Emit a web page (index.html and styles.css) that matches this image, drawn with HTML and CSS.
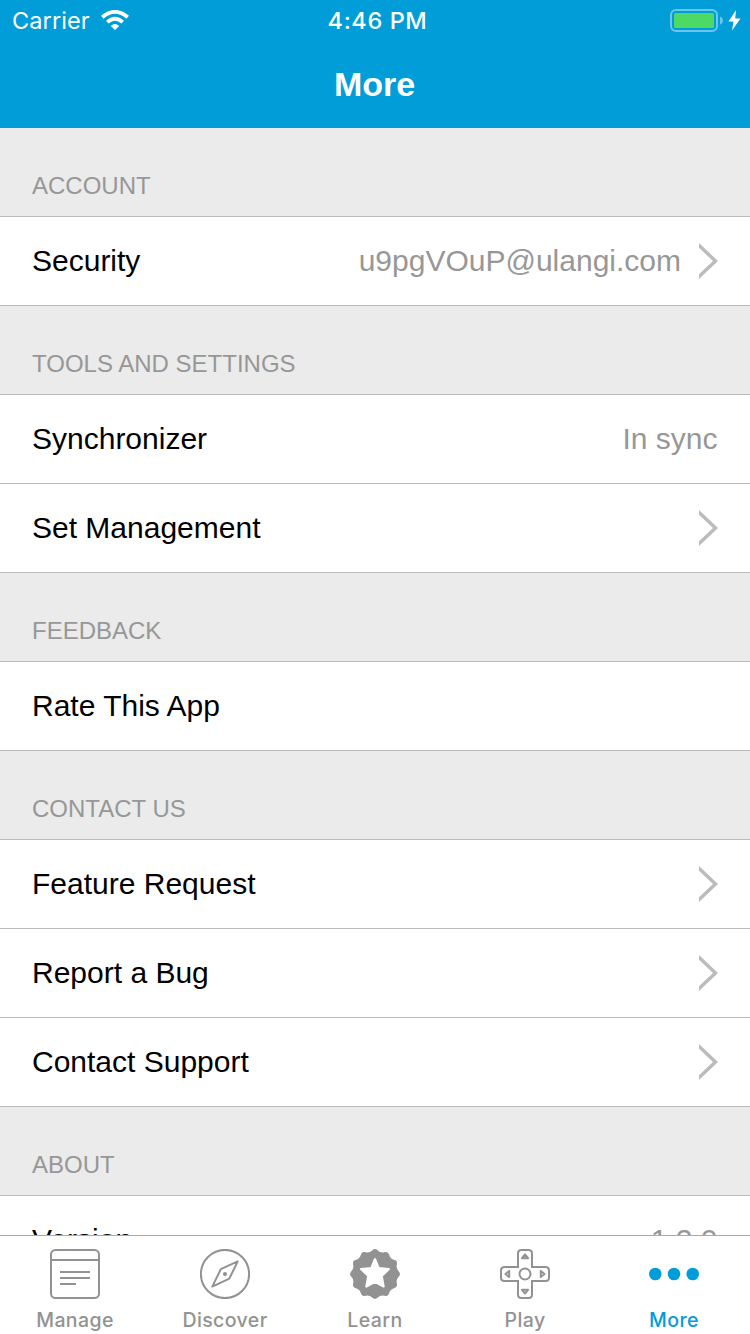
FILE: index.html
```html
<!DOCTYPE html>
<html lang="en">
<head>
<meta charset="utf-8">
<title>More</title>
<link rel="stylesheet" href="styles.css">
</head>
<body>
<svg class="defs" aria-hidden="true">
  <symbol id="chevron" viewBox="0 0 19 36"><path d="M0 0L19 18L0 36V31.2L14 18L0 4.8Z" fill="#bbb"/></symbol>
</svg>
<div class="screen">
  <header class="top">
    <div class="status">
      <div class="status-left">
        <span class="carrier">Carrier</span>
        <svg class="wifi" viewBox="0 0 28 20"><path d="M14 20L9.8 15.9Q14 12.3 18.2 15.9Z" fill="#fff"/><path d="M1.3 7.3Q14 -3.6 26.7 7.3M6.3 12.2Q14 5.2 21.7 12.2" fill="none" stroke="#fff" stroke-width="3.8"/></svg>
      </div>
      <span class="time">4:46 PM</span>
      <div class="status-right">
        <svg class="battery" viewBox="0 0 72 24"><rect x="1" y="1" width="46" height="21" rx="5" fill="none" stroke="#fff" stroke-opacity=".42" stroke-width="2"/><rect x="4" y="4" width="40" height="15" rx="1.5" fill="#4cd964"/><path d="M50 7.5Q53 8.5 53 11.5T50 15.5Z" fill="#fff" fill-opacity=".42"/><path d="M66 1L58.5 12.5H63.5L62 21.5L70.5 9.5H65.2Z" fill="#fff"/></svg>
      </div>
    </div>
    <h1 class="title">More</h1>
  </header>
  <main class="list">
    <h2 class="section">ACCOUNT</h2>
    <div class="row"><span>Security</span><span class="value">u9pgVOuP@ulangi.com</span><svg class="chevron"><use href="#chevron"/></svg></div>
    <h2 class="section">TOOLS AND SETTINGS</h2>
    <div class="row"><span>Synchronizer</span><span class="value">In sync</span></div>
    <div class="row"><span>Set Management</span><svg class="chevron"><use href="#chevron"/></svg></div>
    <h2 class="section">FEEDBACK</h2>
    <div class="row"><span>Rate This App</span></div>
    <h2 class="section">CONTACT US</h2>
    <div class="row"><span>Feature Request</span><svg class="chevron"><use href="#chevron"/></svg></div>
    <div class="row"><span>Report a Bug</span><svg class="chevron"><use href="#chevron"/></svg></div>
    <div class="row"><span>Contact Support</span><svg class="chevron"><use href="#chevron"/></svg></div>
    <h2 class="section">ABOUT</h2>
    <div class="row"><span>Version</span><span class="value">1.2.0</span></div>
  </main>
  <nav class="tabs">
    <div class="tab">
      <svg class="icon" viewBox="0 0 50 50"><g class="line"><rect x="1" y="1" width="48" height="48" rx="4.5"/><path d="M1 11H49M10 23H40M10 29H40M10 35H26"/></g></svg>
      <span class="label">Manage</span>
    </div>
    <div class="tab">
      <svg class="icon" viewBox="0 0 50 50"><g class="line"><circle cx="25" cy="25" r="24.1"/><path d="M37.7 12.4L20.8 20.2L12.3 37.6L29.3 29.6Z" stroke-linejoin="round"/></g><circle cx="25" cy="25" r="2.1" fill="#929292"/></svg>
      <span class="label">Discover</span>
    </div>
    <div class="tab">
      <svg class="icon" viewBox="-25 -25 50 50"><path d="M-2.8 -23.61Q0 -26.36 2.8 -23.61T9.39 -21.85T14.23 -19.05T19.05 -14.23T21.85 -9.39T23.61 -2.8Q26.36 0 23.61 2.8T21.85 9.39T19.05 14.23T14.23 19.05T9.39 21.85T2.8 23.61Q0 26.36 -2.8 23.61T-9.39 21.85T-14.23 19.05T-19.05 14.23T-21.85 9.39T-23.61 2.8Q-26.36 0 -23.61 -2.8T-21.85 -9.39T-19.05 -14.23T-14.23 -19.05T-9.39 -21.85T-2.8 -23.61Z" fill="#929292"/><path d="M0 -14.8L3.7 -5.9L13.9 -5L6.7 2L8.6 12.5L0 7.8L-8.6 12.5L-6.7 2L-13.9 -5L-3.7 -5.9Z" fill="#fff" stroke="#fff" stroke-width="2.2" stroke-linejoin="round"/></svg>
      <span class="label">Learn</span>
    </div>
    <div class="tab">
      <svg class="icon" viewBox="0 0 50 50"><g class="line"><path d="M21.5 1H28.5Q32 1 32 4.5V18H45.5Q49 18 49 21.5V28.5Q49 32 45.5 32H32V45.5Q32 49 28.5 49H21.5Q18 49 18 45.5V32H4.5Q1 32 1 28.5V21.5Q1 18 4.5 18H18V4.5Q18 1 21.5 1Z"/><circle cx="25" cy="25" r="5.5"/><path d="M25 5.5L28 9.2H22ZM25 44.5L28 40.8H22ZM5.5 25L9.2 22V28ZM44.5 25L40.8 22V28Z" stroke-linejoin="round"/></g></svg>
      <span class="label">Play</span>
    </div>
    <div class="tab active">
      <svg class="icon" viewBox="0 0 50 50"><g fill="#009dd9"><circle cx="6.3" cy="25" r="6.3"/><circle cx="25" cy="25" r="6.3"/><circle cx="43.7" cy="25" r="6.3"/></g></svg>
      <span class="label">More</span>
    </div>
  </nav>
</div>
</body>
</html>
```
FILE: styles.css
```css
* { box-sizing: border-box; }
body { margin: 0; font-family: "Liberation Sans", Arial, sans-serif; }
.defs { display: none; }
.screen { width: 750px; height: 1334px; display: flex; flex-direction: column; overflow: hidden; background: #fff; }
.top { height: 128px; flex: none; background: #009dd9; color: #fff; }
.status { height: 40px; display: grid; grid-template-columns: 1fr auto 1fr; align-items: center; padding: 0 8px 0 12px; font-family: Inter, "Noto Sans", sans-serif; font-size: 23.5px; line-height: 38px; }
.status-left { display: flex; align-items: center; gap: 11px; }
.carrier { width: 78px; padding-top: 2px; white-space: nowrap; letter-spacing: 0.1px; }
.wifi { width: 28px; height: 20px; }
.time { padding: 2px 0 0 1px; font-weight: 500; letter-spacing: 0.6px; }
.status-right { display: flex; justify-content: flex-end; }
.battery { width: 72px; height: 24px; margin-top: 2px; }
.title { margin: 0; padding: 4px 1px 0 0; height: 88px; line-height: 80px; font-size: 34px; text-align: center; }
.list { flex: 1; min-height: 0; overflow: hidden; }
.section { margin: 0; height: 89px; padding: 43px 32px 0; background: #ebebeb; border-bottom: 1px solid #bbb; color: #979797; font-size: 24px; line-height: 30px; font-weight: 400; }
.row { height: 89px; padding: 0 32.5px 0 32px; display: flex; align-items: center; background: #fff; border-bottom: 1px solid #bbb; color: #000; font-size: 30px; line-height: 34px; }
.value { margin-left: auto; color: #979797; }
.chevron { width: 19px; height: 36px; margin-left: auto; }
.value + .chevron { margin-left: 17.5px; }
.tabs { height: 99px; flex: none; display: flex; border-top: 1px solid #a9a9a9; background: #fff; }
.tab { flex: 0 0 150px; display: flex; flex-direction: column; align-items: center; padding-top: 13px; color: #929292; }
.active { padding-right: 2px; color: #009dd9; }
.icon { width: 50px; height: 50px; }
.line { fill: none; stroke: #929292; stroke-width: 2; }
.label { margin-top: 9px; font-family: Inter, "Noto Sans", sans-serif; font-size: 19.5px; line-height: 24px; font-weight: 500; letter-spacing: 0.4px; }
```
